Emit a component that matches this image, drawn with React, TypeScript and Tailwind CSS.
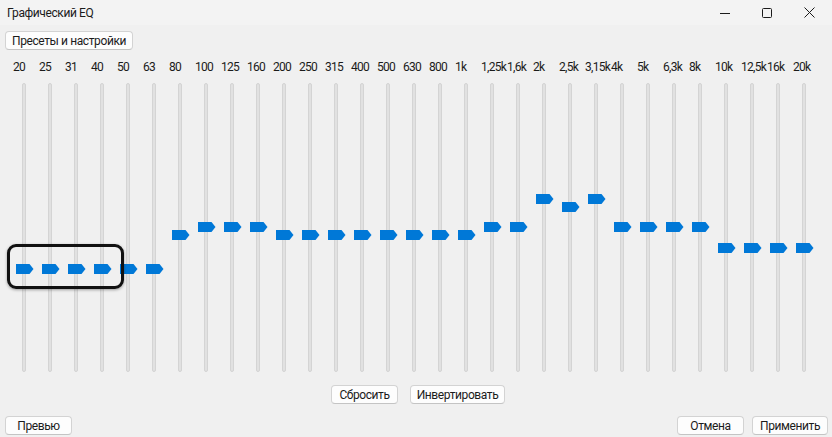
import React from "react";

const bands: { label: string; top: number }[] = [
  { label: "20", top: 181 },
  { label: "25", top: 181 },
  { label: "31", top: 181 },
  { label: "40", top: 181 },
  { label: "50", top: 181 },
  { label: "63", top: 181 },
  { label: "80", top: 147 },
  { label: "100", top: 139 },
  { label: "125", top: 139 },
  { label: "160", top: 139 },
  { label: "200", top: 147 },
  { label: "250", top: 147 },
  { label: "315", top: 147 },
  { label: "400", top: 147 },
  { label: "500", top: 147 },
  { label: "630", top: 147 },
  { label: "800", top: 147 },
  { label: "1k", top: 147 },
  { label: "1,25k", top: 139 },
  { label: "1,6k", top: 139 },
  { label: "2k", top: 111 },
  { label: "2,5k", top: 119 },
  { label: "3,15k", top: 111 },
  { label: "4k", top: 139 },
  { label: "5k", top: 139 },
  { label: "6,3k", top: 139 },
  { label: "8k", top: 139 },
  { label: "10k", top: 160 },
  { label: "12,5k", top: 160 },
  { label: "16k", top: 160 },
  { label: "20k", top: 160 },
];

function Btn({ children, w }: { children: React.ReactNode; w: string }) {
  return (
    <button
      className={`${w} h-[19px] bg-[#fdfdfd] border border-[#d3d3d3] border-b-[#c4c4c4] rounded-[4px] text-[12px] leading-none text-[#1b1b1b] flex items-center justify-center`}
    >
      {children}
    </button>
  );
}

function Thumb() {
  return (
    <svg width="18" height="10" viewBox="0 0 18 10" className="block">
      <path d="M0 0 H13.5 L17.5 5 L13.5 10 H0 Z" fill="#0078d7" />
    </svg>
  );
}

export default function App() {
  return (
    <div className="w-[832px] h-[437px] bg-[#f0f0f0] flex flex-col font-['Roboto',sans-serif] text-[12px] tracking-[-0.4px] text-[#1b1b1b] overflow-hidden">
      {/* title bar */}
      <div className="h-[25px] bg-[#f3f3f3] flex items-center justify-between pl-[7px]">
        <span className="leading-none">Графический EQ</span>
        <div className="flex items-center h-full">
          <div className="w-[46px] h-full flex items-center justify-center">
            <svg width="10" height="10" viewBox="0 0 10 10">
              <path d="M0 5.5 H10" stroke="#1b1b1b" strokeWidth="1" />
            </svg>
          </div>
          <div className="w-[38px] h-full flex items-center justify-center">
            <svg width="10" height="10" viewBox="0 0 10 10">
              <rect x="0.5" y="0.5" width="9" height="9" rx="1" fill="none" stroke="#1b1b1b" strokeWidth="1" />
            </svg>
          </div>
          <div className="w-[46px] h-full flex items-center justify-center">
            <svg width="11" height="11" viewBox="0 0 11 11">
              <path d="M0.5 0.5 L10.5 10.5 M10.5 0.5 L0.5 10.5" stroke="#1b1b1b" strokeWidth="1" />
            </svg>
          </div>
        </div>
      </div>

      <div className="pl-[5px] mt-[6px]">
        <Btn w="w-[128px]">Пресеты и настройки</Btn>
      </div>

      {/* sliders */}
      <div className="relative flex pl-[11px] mt-[9px]">
        {bands.map((b) => (
          <div key={b.label} className="w-[26px] flex flex-col">
            <div className="h-[16px] pl-[2px] leading-[16px] whitespace-nowrap tracking-[-0.7px]">{b.label}</div>
            <div className="relative h-[289px] mt-[8px] flex justify-center">
              <div className="w-[4px] h-full bg-[#e1e1e1] border border-[#d4d4d4] rounded-[2px]" />
              <div className="absolute left-[5px]" style={{ top: b.top }}>
                <Thumb />
              </div>
            </div>
          </div>
        ))}
        <div className="absolute left-[7px] top-[185px] w-[117px] h-[45px] border-[3px] border-[#111] rounded-[9px] shadow-[0_1px_3px_rgba(0,0,0,0.35)]" />
      </div>

      <div className="flex justify-center gap-[12px] mt-[13px] pl-[4px]">
        <Btn w="w-[67px]">Сбросить</Btn>
        <Btn w="w-[95px]">Инвертировать</Btn>
      </div>

      <div className="flex items-center justify-between px-[5px] pr-[4px] mt-[12px]">
        <Btn w="w-[67px]">Превью</Btn>
        <div className="flex gap-[8px]">
          <Btn w="w-[67px]">Отмена</Btn>
          <Btn w="w-[76px]">Применить</Btn>
        </div>
      </div>
    </div>
  );
}
